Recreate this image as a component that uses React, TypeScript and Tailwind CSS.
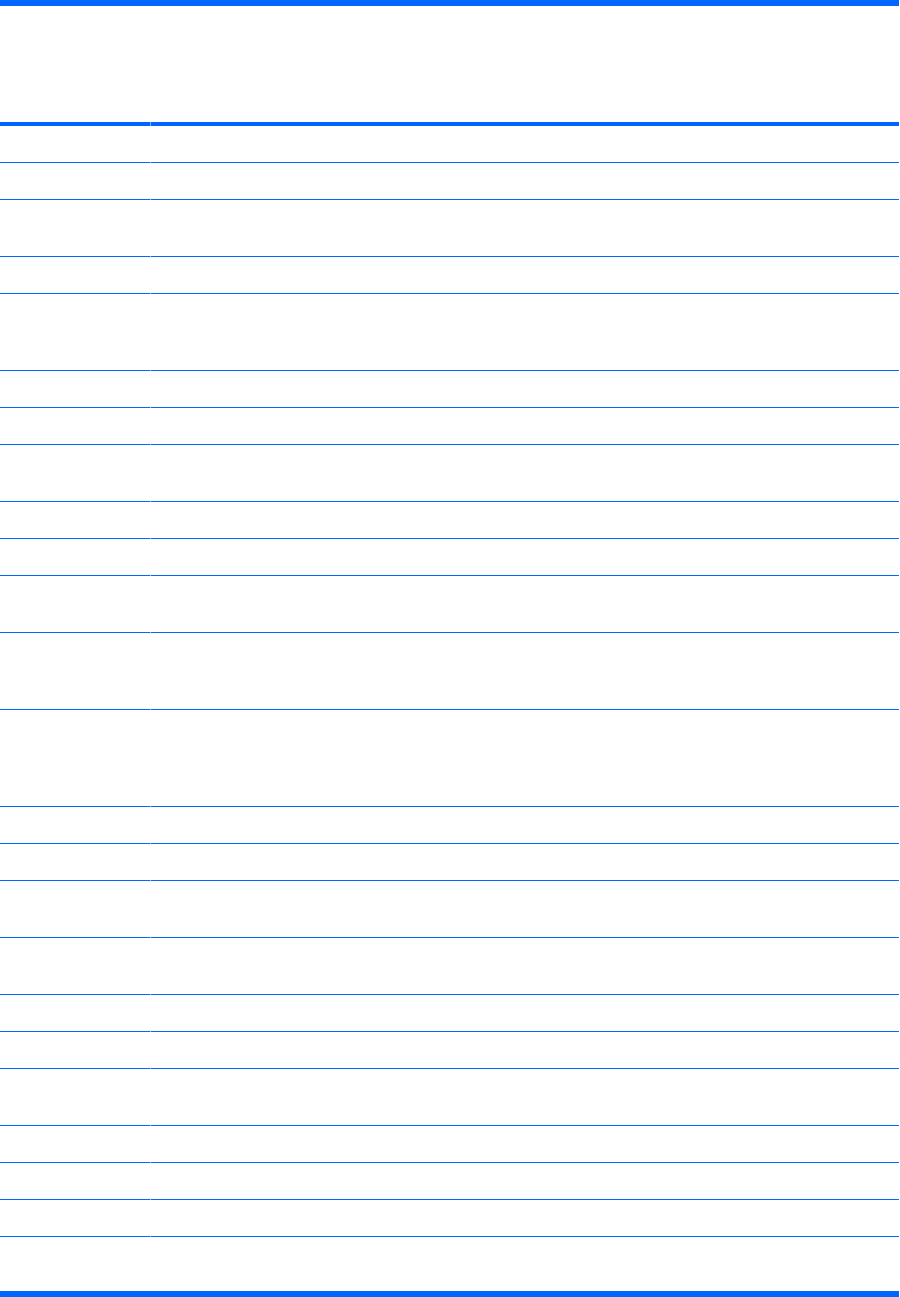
const rowHeights = [36, 36, 56, 36, 76, 36, 36, 56, 36, 36, 56, 76, 96, 36, 36, 56, 56, 36, 36, 56, 36, 36, 36];

function Row({ h }: { h: number }) {
  return (
    <div className="flex" style={{ height: h + 1 }}>
      <div className="w-[150px] border-b border-[#0066ff]"></div>
      <div className="w-px border-b border-[#8cb8ff]"></div>
      <div className="flex-1 border-b border-[#0066ff]"></div>
    </div>
  );
}

export default function App() {
  return (
    <div className="w-[900px] h-[1297px] bg-white">
      <div className="w-[899px]">
        {/* Title bar */}
        <div className="h-[6px] bg-[#0066ff]"></div>
        <div className="h-[116px]"></div>
        {/* Header rule */}
        <div className="flex h-[4px]">
          <div className="w-[150px] bg-[#0066ff]"></div>
          <div className="w-px bg-[#7fb0ff]"></div>
          <div className="flex-1 bg-[#0066ff]"></div>
        </div>
        {rowHeights.map((h, i) => (
          <Row key={i} h={h} />
        ))}
        <div className="h-[54px]"></div>
        {/* Closing rule */}
        <div className="h-[6px] bg-[#0066ff]"></div>
      </div>
    </div>
  );
}
